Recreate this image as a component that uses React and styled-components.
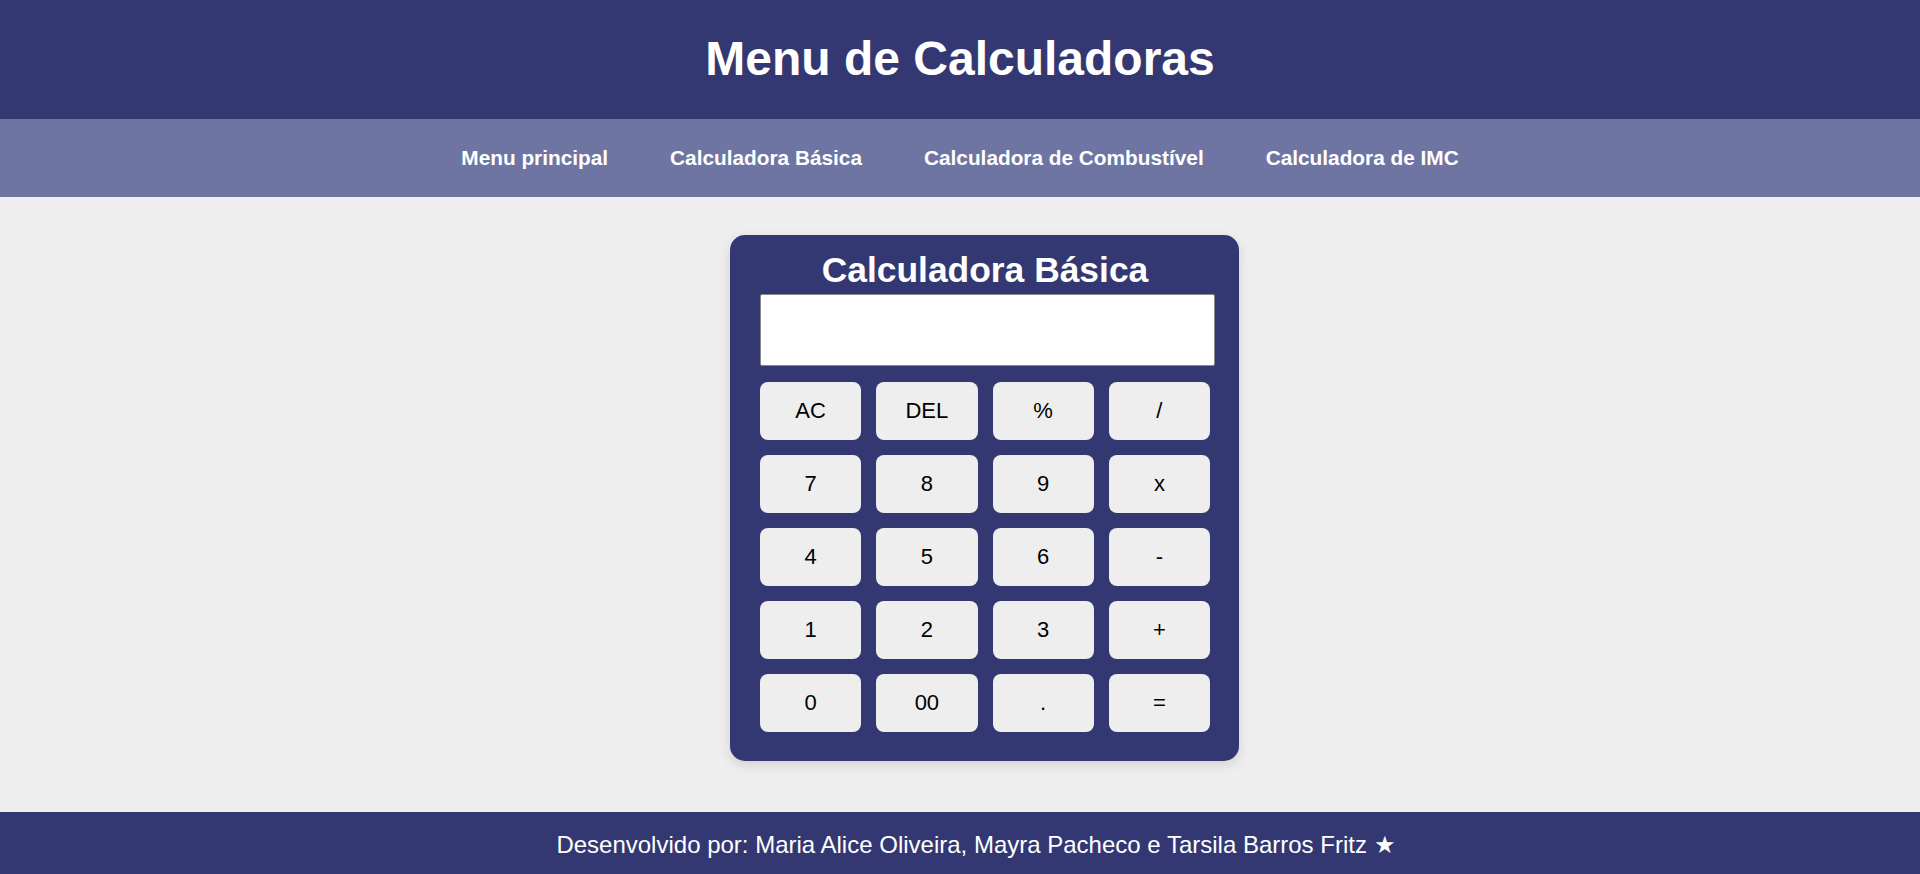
import React from 'react'
import styled, { createGlobalStyle } from 'styled-components'

const GlobalStyle = createGlobalStyle`
    body {
        margin: 0;
        background: #eeeeee;
        font-family: "Liberation Sans", Arial, sans-serif;
    }
`

const Header = styled.header`
    background: #343872;
    height: 119px;
    box-sizing: border-box;
    padding-top: 31px;
    text-align: center;
    h1 {
        margin: 0;
        color: #ffffff;
        font-size: 48px;
        font-weight: bold;
    }
`

const Nav = styled.nav`
    background: #6f75a3;
    height: 78px;
    display: flex;
    justify-content: center;
    align-items: center;
    gap: 62px;
`

const NavLink = styled.a`
    color: #ffffff;
    font-weight: bold;
    font-size: 20.8px;
    text-decoration: none;
    cursor: pointer;
`

const Main = styled.main`
    display: flex;
    justify-content: center;
    padding: 38px 0 51px 49px;
`

const Card = styled.div`
    background: #343872;
    border-radius: 15px;
    padding: 15px 29px 29px 30px;
    width: 450px;
    box-shadow: 0 4px 12px rgba(0, 0, 0, 0.12);
    h2 {
        margin: 0;
        color: #ffffff;
        font-size: 35.4px;
        text-align: center;
    }
`

const Display = styled.div`
    margin-top: 3px;
    width: 455px;
    height: 72px;
    box-sizing: border-box;
    background: #ffffff;
    border: 1px solid #8a8a8a;
    border-radius: 2px;
`

const Keys = styled.div`
    margin-top: 16px;
    display: grid;
    grid-template-columns: repeat(4, 1fr);
    grid-auto-rows: 58px;
    gap: 15px;
`

const Key = styled.button`
    background: #eeeeee;
    border: none;
    border-radius: 8px;
    font-family: "Liberation Sans", Arial, sans-serif;
    font-size: 22px;
    color: #000000;
    cursor: pointer;
`

const Footer = styled.footer`
    background: #343872;
    color: #ffffff;
    text-align: center;
    font-size: 24px;
    padding: 19px 0 20px 32px;
`

const keys = ['AC', 'DEL', '%', '/', '7', '8', '9', 'x', '4', '5', '6', '-', '1', '2', '3', '+', '0', '00', '.', '=']

export default function App() {
    return (
        <>
            <GlobalStyle />
            <Header>
                <h1>Menu de Calculadoras</h1>
            </Header>
            <Nav>
                <NavLink>Menu principal</NavLink>
                <NavLink>Calculadora Básica</NavLink>
                <NavLink>Calculadora de Combustível</NavLink>
                <NavLink>Calculadora de IMC</NavLink>
            </Nav>
            <Main>
                <Card>
                    <h2>Calculadora Básica</h2>
                    <Display />
                    <Keys>
                        {keys.map(k => <Key key={k}>{k}</Key>)}
                    </Keys>
                </Card>
            </Main>
            <Footer>Desenvolvido por: Maria Alice Oliveira, Mayra Pacheco e Tarsila Barros Fritz ★</Footer>
        </>
    )
}
